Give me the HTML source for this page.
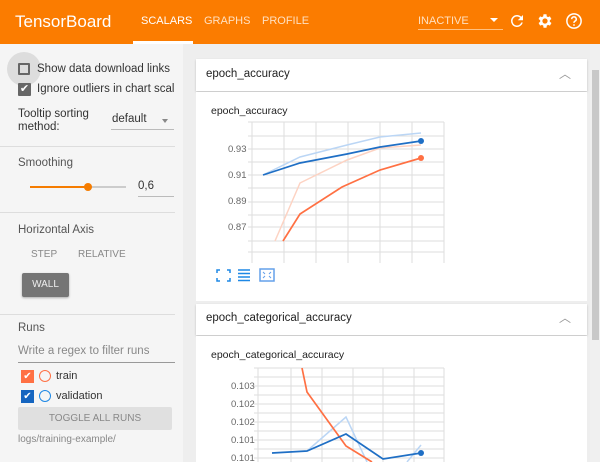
<!DOCTYPE html>
<html><head><meta charset="utf-8"><style>
*{box-sizing:border-box;margin:0;padding:0}
body{width:600px;height:462px;overflow:hidden;font-family:"Liberation Sans",sans-serif;background:#eeeeee;position:relative;color:#333}
.hdr{position:absolute;left:0;top:0;width:600px;height:44px;background:#fb7c00;color:#fff}
.abs{position:absolute}
.side{position:absolute;left:0;top:44px;width:183px;height:418px;background:#f5f5f5}
.t12{font-size:11.5px}
.sep{position:absolute;left:0;width:175px;height:1px;background:#ddd}
.card{position:absolute;left:196px;width:391px;background:#fff;box-shadow:0 1px 2px rgba(0,0,0,.2)}
</style></head><body>
<div class="hdr">
 <div class="abs" style="left:15px;top:12px;font-size:17px">TensorBoard</div>
 <div class="abs" style="left:141px;top:15px;font-size:11px">SCALARS</div>
 <div class="abs" style="left:133px;top:41px;width:60px;height:3px;background:#fff"></div>
 <div class="abs" style="left:204px;top:15px;font-size:11px;color:#ffe0c0">GRAPHS</div>
 <div class="abs" style="left:262px;top:15px;font-size:11px;color:#ffe0c0">PROFILE</div>
 <div class="abs" style="left:418px;top:15px;font-size:11px;color:#ffe0c0">INACTIVE</div>
 <div class="abs" style="left:418px;top:29px;width:85px;height:1px;background:#ffc080"></div>
 <div class="abs" style="left:490px;top:18px;border:4px solid transparent;border-top:4px solid #fff"></div>
 <svg class="abs" style="left:508px;top:12px" width="18" height="18" viewBox="0 0 24 24"><path fill="#fff" d="M17.65 6.35A7.96 7.96 0 0 0 12 4a8 8 0 1 0 7.73 10h-2.08A6 6 0 1 1 12 6c1.66 0 3.140.69 4.22 1.78L13 11h7V4l-2.35 2.35z"/></svg>
 <svg class="abs" style="left:536px;top:12px" width="18" height="18" viewBox="0 0 24 24"><path fill="#fff" d="M19.4 13a7.5 7.5 0 0 0 0-2l2.1-1.6-2-3.5-2.5 1a7 7 0 0 0-1.7-1L15 3h-4l-.4 2.9a7 7 0 0 0-1.7 1l-2.5-1-2 3.5L6.6 11a7.5 7.5 0 0 0 0 2l-2.1 1.6 2 3.5 2.5-1c.5.4 1.1.7 1.7 1L11 21h4l.4-2.9c.6-.3 1.2-.6 1.7-1l2.5 1 2-3.5zM13 15.5a3.5 3.5 0 1 1 0-7 3.5 3.5 0 0 1 0 7z" transform="translate(-1 0)"/></svg>
 <svg class="abs" style="left:565px;top:12px" width="18" height="18" viewBox="0 0 24 24"><circle cx="12" cy="12" r="9.5" fill="none" stroke="#fff" stroke-width="2"/><path d="M9 9.5a3 3 0 1 1 4.2 2.7c-.8.4-1.2 1-1.2 1.8v.5" fill="none" stroke="#fff" stroke-width="2"/><circle cx="12" cy="17.3" r="1.2" fill="#fff"/></svg>
</div>
<div class="side">
 <div class="abs" style="left:7px;top:8px;width:34px;height:34px;border-radius:50%;background:#ddd"></div>
 <div class="abs" style="left:18px;top:19px;width:12px;height:12px;border:2px solid #666;border-radius:1px"></div>
 <div class="abs t12" style="left:37px;top:19px">Show data download links</div>
 <div class="abs" style="left:18px;top:39px;width:13px;height:13px;background:#666;border-radius:1px;color:#fff;font-size:11px;line-height:13px;text-align:center">✔</div>
 <div class="abs t12" style="left:37px;top:39px;white-space:nowrap;width:138px;overflow:hidden">Ignore outliers in chart scaling</div>
 <div class="abs t12" style="left:18px;top:64px;line-height:13px">Tooltip sorting<br>method:</div>
 <div class="abs t12" style="left:112px;top:69px">default</div>
 <div class="abs" style="left:162px;top:75px;border:3.5px solid transparent;border-top:4px solid #888"></div>
 <div class="abs" style="left:111px;top:85px;width:63px;height:1px;background:#bbb"></div>
 <div class="sep" style="top:102px"></div>
 <div class="abs t12" style="left:18px;top:113px;color:#555">Smoothing</div>
 <div class="abs" style="left:30px;top:142px;width:58px;height:2px;background:#f57c00"></div>
 <div class="abs" style="left:88px;top:142px;width:38px;height:2px;background:#ccc"></div>
 <div class="abs" style="left:84px;top:139px;width:8px;height:8px;border-radius:50%;background:#f57c00"></div>
 <div class="abs t12" style="left:138px;top:136px">0,6</div>
 <div class="abs" style="left:138px;top:152px;width:36px;height:1px;background:#bbb"></div>
 <div class="sep" style="top:168px"></div>
 <div class="abs t12" style="left:18px;top:180px;color:#555">Horizontal Axis</div>
 <div class="abs" style="left:31px;top:205px;font-size:10px;color:#888">STEP</div>
 <div class="abs" style="left:78px;top:205px;font-size:10px;color:#888">RELATIVE</div>
 <div class="abs" style="left:22px;top:229px;width:47px;height:24px;background:#757575;border-radius:2px;color:#eee;font-size:10px;text-align:center;line-height:24px;box-shadow:0 1px 2px rgba(0,0,0,.3)">WALL</div>
 <div class="sep" style="top:270px"></div>
 <div class="abs t12" style="left:18px;top:278px;color:#555">Runs</div>
 <div class="abs t12" style="left:18px;top:301px;color:#888">Write a regex to filter runs</div>
 <div class="abs" style="left:18px;top:318px;width:157px;height:1px;background:#999"></div>
 <div class="abs" style="left:21px;top:326px;width:13px;height:13px;background:#ff7043;color:#fff;font-size:10px;line-height:13px;text-align:center">✔</div>
 <div class="abs" style="left:39px;top:326px;width:12px;height:12px;border:1.5px solid #ff7043;border-radius:50%"></div>
 <div class="abs" style="left:56px;top:326px;font-size:11px">train</div>
 <div class="abs" style="left:21px;top:346px;width:13px;height:13px;background:#1565c0;color:#fff;font-size:10px;line-height:13px;text-align:center">✔</div>
 <div class="abs" style="left:39px;top:346px;width:12px;height:12px;border:1.5px solid #1e88e5;border-radius:50%"></div>
 <div class="abs" style="left:56px;top:346px;font-size:11px">validation</div>
 <div class="abs" style="left:18px;top:363px;width:154px;height:23px;background:#e0e0e0;border-radius:2px;font-size:10px;color:#888;text-align:center;line-height:23px">TOGGLE ALL RUNS</div>
 <div class="abs" style="left:18px;top:390px;font-size:10px;color:#888">logs/training-example/</div>
</div>
<div class="abs" style="left:590px;top:44px;width:10px;height:418px;background:#f0f0f0"></div>
<div class="abs" style="left:592px;top:70px;width:7px;height:270px;background:#c8c8c8"></div>

<div class="card" style="top:59px;height:32px"><div class="abs t12" style="left:10px;top:9px;color:#222">epoch_accuracy</div><div class="abs" style="left:363px;top:6px;font-size:12px;color:#999">︿</div></div>
<div class="card" style="top:92px;height:209px;box-shadow:none"></div>
<div class="card" style="top:304px;height:31px"><div class="abs t12" style="left:10px;top:8px;color:#222">epoch_categorical_accuracy</div><div class="abs" style="left:363px;top:5px;font-size:12px;color:#999">︿</div></div>
<div class="card" style="top:336px;height:126px;box-shadow:none"></div>

<svg class="abs" style="left:0;top:0" width="600" height="462" font-family="Liberation Sans" font-size="9.5" fill="#666">
 <text x="211" y="114" font-size="10.5" fill="#222">epoch_accuracy</text>
 <g stroke="#ddd" stroke-width="1" fill="none">
  <path d="M252 122V263M284 122V263M316 122V263M348 122V263M380 122V263M412 122V263M444 122V263"/>
  <path d="M248 122H444M248 136H444M248 149H444M248 162H444M248 175H444M248 188H444M248 202H444M248 215H444M248 227H444M248 241H444M248 252H444"/>
 </g>
 <text x="228" y="152">0.93</text><text x="228" y="178">0.91</text><text x="228" y="204">0.89</text><text x="228" y="230">0.87</text>
 <polyline fill="none" stroke="#bbd6f5" stroke-width="1.5" points="263,175 300,157 347,145 380,137 421,133"/>
 <polyline fill="none" stroke="#fdd3c3" stroke-width="1.5" points="275,241 300,183 347,160 380,148 421,145"/>
 <polyline fill="none" stroke="#1f6fc5" stroke-width="1.7" points="263,175 300,163 347,154 380,147 421,141"/>
 <polyline fill="none" stroke="#ff7043" stroke-width="1.7" points="283,241 300,214 342,187 380,170 421,158"/>
 <circle cx="421" cy="141" r="3" fill="#1f6fc5"/><circle cx="421" cy="158" r="3" fill="#ff7043"/>
 <g fill="none" stroke="#1e88e5" stroke-width="1.5">
  <path d="M217 273v-3h3M227 270h3v3M230 278v3h-3M220 281h-3v-3"/>
  <path d="M238 270h12M238 273.5h12M238 277h12M238 280.5h12"/>
  <rect x="260" y="269" width="14" height="12" stroke="#64a0ea"/>
  <path d="M263 272l2 2M271 272l-2 2M263 278l2-2M271 278l-2-2" stroke="#64a0ea" stroke-width="1"/>
 </g>
 <text x="211" y="358" font-size="10.5" fill="#222">epoch_categorical_accuracy</text>
 <g stroke="#ddd" stroke-width="1" fill="none">
  <path d="M258 368V462M291 368V462M322 368V462M353 368V462M383 368V462M414 368V462M444 368V462"/>
  <path d="M254 368H444M254 377H444M254 386H444M254 395H444M254 404H444M254 413H444M254 422H444M254 431H444M254 440H444M254 449H444M254 458H444"/>
 </g>
 <text x="231" y="389">0.103</text><text x="231" y="407">0.102</text><text x="231" y="425">0.102</text><text x="231" y="443">0.101</text><text x="231" y="461">0.101</text>
 <polyline fill="none" stroke="#bbd6f5" stroke-width="1.5" points="307,451 346,417 367,462"/>
 <polyline fill="none" stroke="#bbd6f5" stroke-width="1.5" points="407,462 421,445"/>
 <polyline fill="none" stroke="#ff7043" stroke-width="1.7" points="302,368 307,392 346,446 372,462"/>
 <polyline fill="none" stroke="#1f6fc5" stroke-width="1.7" points="272,453 307,451 346,434 383,459 421,453"/>
 <circle cx="421" cy="453" r="3" fill="#1f6fc5"/>
</svg>
</body></html>
